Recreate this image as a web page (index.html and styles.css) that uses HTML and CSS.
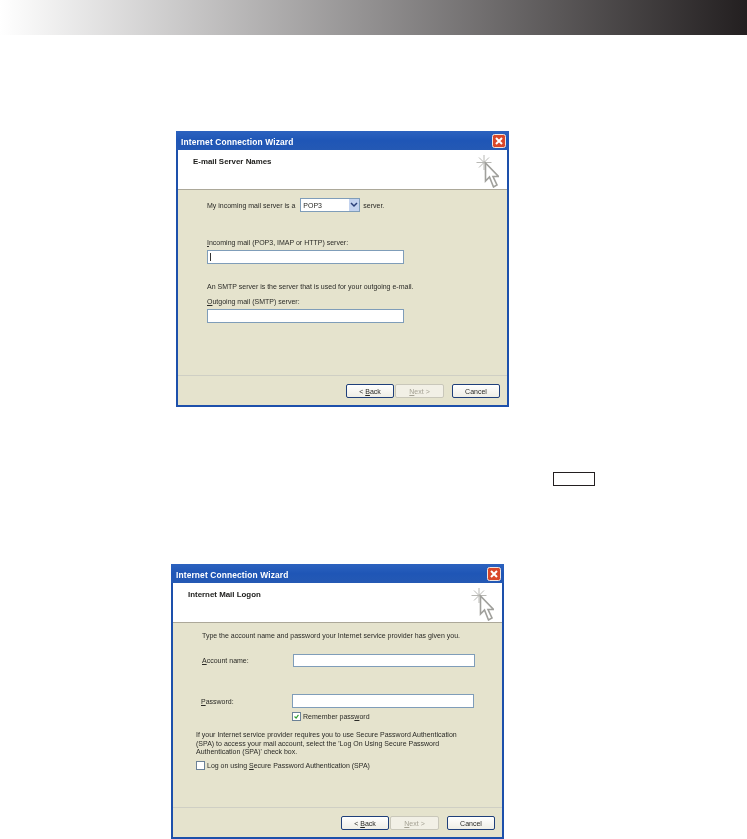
FILE: index.html
```html
<!DOCTYPE html>
<html lang="en">

<head>
  <meta charset="UTF-8">
  <title>Internet Connection Wizard</title>
  <link rel="stylesheet" href="styles.css">
</head>

<body>
  <div class="top-bar"></div>

  <div class="wizard wizard-server">
    <div class="title-bar">
      <span class="title-text">Internet Connection Wizard</span>
      <svg class="close-btn" viewBox="0 0 14 14">
        <rect x="0.5" y="0.5" width="13" height="13" rx="2" fill="#d9482a" stroke="#f0e6e0" />
        <path d="M4 4l6 6M10 4l-6 6" stroke="#fff" stroke-width="2" />
      </svg>
    </div>
    <div class="head">
      <span class="head-text">E-mail Server Names</span>
      <svg class="wizard-icon" viewBox="0 0 26 35">
        <path d="M11 2v15M3.500 9.500h15M6 4.500l10 10M16 4.500l-10 10" stroke="#b8b8b4" fill="none" />
        <path d="M12.500 10v18l4-4 4 10 3.500-2-4-8.500h5.500z" fill="#fff" stroke="#a0a09c" stroke-width="1.6" />
      </svg>
    </div>
    <div class="content">
      <div class="server-row">
        <span>My incoming mail server is a</span>
        <div class="combo">
          <span>POP3</span>
          <span class="combo-btn">
            <svg viewBox="0 0 8 6" width="8" height="6">
              <path d="M1 1l3 3 3-3" stroke="#2a3f78" stroke-width="1.5" fill="none" />
            </svg>
          </span>
        </div>
        <span>server.</span>
      </div>
      <div class="label incoming-label"><u>I</u>ncoming mail (POP3, IMAP or HTTP) server:</div>
      <div class="field field-wide"><span class="caret"></span></div>
      <div class="label smtp-note">An SMTP server is the server that is used for your outgoing e-mail.</div>
      <div class="label outgoing-label"><u>O</u>utgoing mail (SMTP) server:</div>
      <div class="field field-wide"></div>
    </div>
    <div class="foot">
      <button class="btn">&lt; <u>B</u>ack</button>
      <button class="btn btn-off"><u>N</u>ext &gt;</button>
      <button class="btn btn-cancel">Cancel</button>
    </div>
  </div>

  <div class="key-box"></div>

  <div class="wizard wizard-logon">
    <div class="title-bar">
      <span class="title-text">Internet Connection Wizard</span>
      <svg class="close-btn" viewBox="0 0 14 14">
        <rect x="0.5" y="0.5" width="13" height="13" rx="2" fill="#d9482a" stroke="#f0e6e0" />
        <path d="M4 4l6 6M10 4l-6 6" stroke="#fff" stroke-width="2" />
      </svg>
    </div>
    <div class="head">
      <span class="head-text">Internet Mail Logon</span>
      <svg class="wizard-icon" viewBox="0 0 26 35">
        <path d="M11 2v15M3.500 9.500h15M6 4.500l10 10M16 4.500l-10 10" stroke="#b8b8b4" fill="none" />
        <path d="M12.500 10v18l4-4 4 10 3.500-2-4-8.500h5.500z" fill="#fff" stroke="#a0a09c" stroke-width="1.6" />
      </svg>
    </div>
    <div class="content logon-content">
      <div class="label intro">Type the account name and password your Internet service provider has given you.</div>
      <div class="logon-row account-row">
        <span class="logon-label"><u>A</u>ccount name:</span>
        <div class="field field-logon"></div>
      </div>
      <div class="logon-row password-row">
        <span class="logon-label"><u>P</u>assword:</span>
        <div class="field field-logon"></div>
      </div>
      <div class="check-row remember-row">
        <span class="check">
          <svg viewBox="0 0 9 9" width="9" height="9">
            <path d="M2 4.500l2 2 3-4" stroke="#2f9e2f" stroke-width="1.5" fill="none" />
          </svg>
        </span>
        <span>Remember pass<u>w</u>ord</span>
      </div>
      <div class="spa-note">If your Internet service provider requires you to use Secure Password Authentication (SPA) to access your mail account, select the 'Log On Using Secure Password Authentication (SPA)' check box.</div>
      <div class="check-row spa-row">
        <span class="check"></span>
        <span>Log on using <u>S</u>ecure Password Authentication (SPA)</span>
      </div>
    </div>
    <div class="foot">
      <button class="btn">&lt; <u>B</u>ack</button>
      <button class="btn btn-off"><u>N</u>ext &gt;</button>
      <button class="btn btn-cancel">Cancel</button>
    </div>
  </div>
</body>

</html>
```

FILE: styles.css
```css
body {
  margin: 0;
  background: #fff;
  font-family: "Liberation Sans", Arial, sans-serif;
  font-size: 7px;
  color: #2a2a26;
}

.top-bar {
  height: 35px;
  background: linear-gradient(to right, #fff 0%, #231f20 100%);
}

.wizard {
  width: 333px;
  height: 276px;
  box-sizing: border-box;
  display: flex;
  flex-direction: column;
  background: #e5e3cd;
  border: 2px solid #1d50ab;
  border-top: 0;
  filter: blur(0.45px);
}

.wizard-server {
  margin: 96px 0 0 176px;
}

.wizard-logon {
  height: 275px;
  margin: 78px 0 0 171px;
}

.title-bar {
  height: 19px;
  margin: 0 -2px;
  padding: 0 3px 0 5px;
  display: flex;
  align-items: center;
  justify-content: space-between;
  background: linear-gradient(to bottom, #2c62bf 0%, #1f56b6 50%, #2459b4 100%);
}

.title-text {
  padding-top: 2px;
  color: #fff;
  font-weight: bold;
  font-size: 8.4px;
  letter-spacing: 0.14px;
}

.close-btn {
  width: 14px;
  height: 14px;
}

.head {
  height: 39px;
  flex: none;
  position: relative;
  background: #fff;
  border-bottom: 1px solid #aca899;
}

.head-text {
  display: block;
  padding: 7px 0 0 15px;
  font-weight: bold;
  font-size: 7.9px;
  color: #1a1a18;
}

/* pointer graphic sits over the white header band */
.wizard-icon {
  position: absolute;
  right: 8px;
  top: 3px;
  width: 26px;
  height: 35px;
}

.content {
  flex: 1;
  padding: 8px 0 0 29px;
}

.logon-content {
  padding: 8px 0 0 23px;
}

.label {
  line-height: 9px;
}

.server-row {
  display: flex;
  align-items: center;
  gap: 3px;
  height: 14px;
}

.combo {
  width: 60px;
  height: 14px;
  box-sizing: border-box;
  margin-left: 2px;
  padding-left: 2px;
  display: flex;
  align-items: center;
  justify-content: space-between;
  background: #fff;
  border: 1px solid #7f9db9;
}

.combo-btn {
  width: 10px;
  height: 12px;
  display: flex;
  align-items: center;
  justify-content: center;
  background: #c3d3ef;
}

.field {
  box-sizing: border-box;
  background: #fff;
  border: 1px solid #7f9db9;
}

.field-wide {
  width: 197px;
  height: 14px;
  padding: 2px 0 0 2px;
}

.caret {
  display: block;
  width: 1px;
  height: 8px;
  background: #333;
}

.incoming-label {
  margin-top: 26px;
  margin-bottom: 3px;
}

.smtp-note {
  margin-top: 18px;
}

.outgoing-label {
  margin-top: 6px;
  margin-bottom: 3px;
}

.intro {
  margin-left: 6px;
}

.logon-row {
  display: flex;
  align-items: center;
}

.logon-label {
  width: 91px;
  flex: none;
}

.field-logon {
  width: 182px;
  height: 13px;
}

.account-row {
  margin: 14px 0 0 6px;
}

.password-row {
  margin: 27px 0 0 5px;
}

.password-row .field-logon {
  height: 14px;
}

.check-row {
  display: flex;
  align-items: center;
  gap: 2px;
}

.remember-row {
  margin: 4px 0 0 96px;
}

.check {
  width: 9px;
  height: 9px;
  box-sizing: border-box;
  display: flex;
  align-items: center;
  justify-content: center;
  background: #fff;
  border: 1px solid #6b8197;
}

.spa-note {
  width: 266px;
  margin-top: 10px;
  line-height: 8.6px;
}

.spa-row {
  margin-top: 4px;
}

.foot {
  height: 30px;
  flex: none;
  box-sizing: border-box;
  padding: 8px 7px 0 0;
  display: flex;
  justify-content: flex-end;
  border-top: 1px solid #cfcfc4;
}

.btn {
  width: 48px;
  height: 14px;
  margin-left: 1px;
  padding: 0;
  font: inherit;
  color: #2a2a26;
  background: linear-gradient(to bottom, #fff, #efeee6);
  border: 1px solid #1f3f7a;
  border-radius: 2px;
}

.btn-off {
  width: 49px;
  color: #a5a294;
  background: #f2f0e6;
  border-color: #c9c7ba;
}

.btn-cancel {
  margin-left: 8px;
}

.key-box {
  width: 42px;
  height: 14px;
  box-sizing: border-box;
  margin: 65px 0 0 553px;
  border: 1px solid #231f20;
}
```
